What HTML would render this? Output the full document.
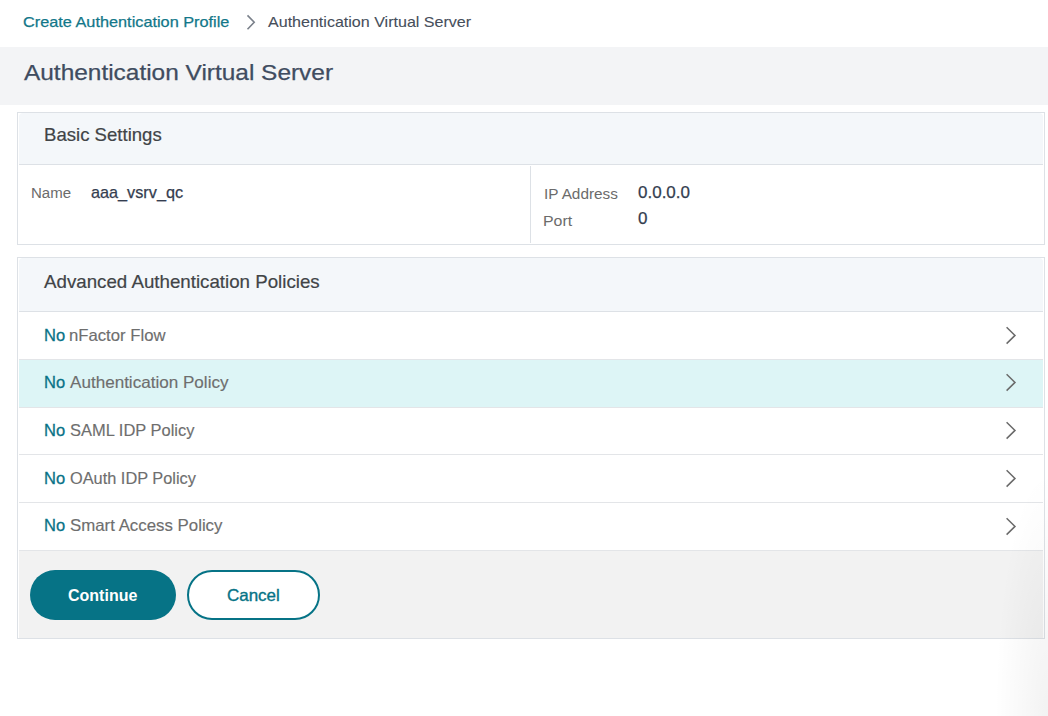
<!DOCTYPE html>
<html>
<head>
<meta charset="utf-8">
<style>
* { box-sizing: border-box; margin: 0; padding: 0; }
html, body { width: 1048px; height: 716px; overflow: hidden; background: #fff; }
body { font-family: "Liberation Sans", sans-serif; position: relative; }
.a { position: absolute; white-space: nowrap; }
.t { line-height: 1; transform-origin: 0 0; }
.box { border: 1px solid #dde1e6; background: #fff; }
.hbg { background: #f4f7fa; border-radius: 4px 4px 0 0; }
.hline { background: #dde1e6; height: 1px; }
.sep { background: #e3e5e8; height: 1px; left: 19px; width: 1024px; }
.rt b { color: #087287; font-weight: 700; }
.chev { left: 1003px; }
.btn { border-radius: 25px; }
.b1 { left: 30px; top: 570px; width: 146px; height: 50px; background: #067386; }
.b2 { left: 187px; top: 570px; width: 133px; height: 50px; background: #fff; border: 2px solid #067386; }
.shadow { left: 995px; top: 470px; width: 53px; height: 246px; background: radial-gradient(ellipse 53px 246px at 100% 100%, rgba(0,0,0,0.05), rgba(0,0,0,0) 100%); pointer-events: none; }
</style>
</head>
<body>
<div class="a" style="left:0;top:47px;width:1048px;height:58px;background:#f3f4f6"></div>
<svg class="a" style="left:245px;top:13px" width="12" height="18" viewBox="0 0 12 18"><path d="M2.5 2.4 L9.2 9.3 L2.5 16.3" fill="none" stroke="#7a808a" stroke-width="1.6"/></svg>

<div class="a box" style="left:17px;top:112px;width:1028px;height:133px"></div>
<div class="a hbg" style="left:19px;top:113px;width:1024px;height:51px"></div>
<div class="a hline" style="left:19px;top:164px;width:1024px"></div>
<div class="a" style="left:530px;top:166px;width:1px;height:77px;background:#dde1e6"></div>

<div class="a box" style="left:17px;top:257px;width:1028px;height:382px"></div>
<div class="a hbg" style="left:19px;top:258px;width:1024px;height:53px"></div>
<div class="a hline" style="left:19px;top:311px;width:1024px"></div>
<div class="a" style="left:19px;top:360px;width:1024px;height:47px;background:#ddf5f6"></div>
<div class="a sep" style="top:359px"></div>
<div class="a sep" style="top:407px"></div>
<div class="a sep" style="top:454px"></div>
<div class="a sep" style="top:502px"></div>
<div class="a sep" style="top:550px"></div>
<div class="a" style="left:19px;top:551px;width:1024px;height:87px;background:#f2f2f2"></div>
<svg class="a chev" style="top:325px" width="20" height="20" viewBox="0 0 20 20"><path d="M3.6 2.2 L12 10.4 L3.6 18.6" fill="none" stroke="#6a6a6a" stroke-width="1.5"/></svg><svg class="a chev" style="top:372px" width="20" height="20" viewBox="0 0 20 20"><path d="M3.6 2.2 L12 10.4 L3.6 18.6" fill="none" stroke="#6a6a6a" stroke-width="1.5"/></svg><svg class="a chev" style="top:420px" width="20" height="20" viewBox="0 0 20 20"><path d="M3.6 2.2 L12 10.4 L3.6 18.6" fill="none" stroke="#6a6a6a" stroke-width="1.5"/></svg><svg class="a chev" style="top:468px" width="20" height="20" viewBox="0 0 20 20"><path d="M3.6 2.2 L12 10.4 L3.6 18.6" fill="none" stroke="#6a6a6a" stroke-width="1.5"/></svg><svg class="a chev" style="top:516px" width="20" height="20" viewBox="0 0 20 20"><path d="M3.6 2.2 L12 10.4 L3.6 18.6" fill="none" stroke="#6a6a6a" stroke-width="1.5"/></svg>
<div class="a btn b1"></div>
<div class="a btn b2"></div>
<div id="crumb1" class="a t " style="left:23px;top:14px;font-size:15px;font-weight:400;color:#127789;-webkit-text-stroke:0.25px #127789;transform:scaleX(1.0856);">Create Authentication Profile</div>
<div id="crumb2" class="a t " style="left:268px;top:14px;font-size:15px;font-weight:400;color:#464e5b;-webkit-text-stroke:0.1px #464e5b;transform:scaleX(1.07);">Authentication Virtual Server</div>
<div id="title" class="a t " style="left:24px;top:62px;font-size:22px;font-weight:400;color:#404c60;-webkit-text-stroke:0.25px #404c60;transform:scaleX(1.11);">Authentication Virtual Server</div>
<div id="basic" class="a t " style="left:44px;top:125px;font-size:19px;font-weight:400;color:#414447;-webkit-text-stroke:0.2px #414447;transform:scaleX(0.9779);">Basic Settings</div>
<div id="name" class="a t " style="left:31px;top:185px;font-size:15.5px;font-weight:400;color:#6b6b6b;transform:scaleX(0.97);">Name</div>
<div id="aaa" class="a t " style="left:91px;top:184px;font-size:17px;font-weight:400;color:#343d4f;-webkit-text-stroke:0.25px #343d4f;transform:scaleX(0.955);">aaa_vsrv_qc</div>
<div id="ip" class="a t " style="left:544px;top:186px;font-size:15.5px;font-weight:400;color:#6b6b6b;transform:scaleX(0.99);">IP Address</div>
<div id="ipv" class="a t " style="left:638px;top:184px;font-size:17px;font-weight:400;color:#343d4f;-webkit-text-stroke:0.25px #343d4f;">0.0.0.0</div>
<div id="port" class="a t " style="left:543px;top:213px;font-size:15.5px;font-weight:400;color:#6b6b6b;transform:scaleX(1.0267);">Port</div>
<div id="portv" class="a t " style="left:638px;top:210px;font-size:17px;font-weight:400;color:#343d4f;-webkit-text-stroke:0.25px #343d4f;">0</div>
<div id="adv" class="a t " style="left:44px;top:272px;font-size:19px;font-weight:400;color:#414447;-webkit-text-stroke:0.2px #414447;transform:scaleX(0.985);">Advanced Authentication Policies</div>
<div id="n1" class="a t " style="left:44px;top:327px;font-size:16.5px;font-weight:400;color:#087287;-webkit-text-stroke:0.3px #087287;">No</div>
<div id="n2" class="a t " style="left:44px;top:374px;font-size:16.5px;font-weight:400;color:#087287;-webkit-text-stroke:0.3px #087287;">No</div>
<div id="n3" class="a t " style="left:44px;top:422px;font-size:16.5px;font-weight:400;color:#087287;-webkit-text-stroke:0.3px #087287;">No</div>
<div id="n4" class="a t " style="left:44px;top:470px;font-size:16.5px;font-weight:400;color:#087287;-webkit-text-stroke:0.3px #087287;">No</div>
<div id="n5" class="a t " style="left:44px;top:517px;font-size:16.5px;font-weight:400;color:#087287;-webkit-text-stroke:0.3px #087287;">No</div>
<div id="r1" class="a t " style="left:69px;top:327px;font-size:16.5px;font-weight:400;color:#6e6e6e;-webkit-text-stroke:0.15px #6e6e6e;transform:scaleX(1.0116);">nFactor Flow</div>
<div id="r2" class="a t " style="left:70px;top:374px;font-size:16.5px;font-weight:400;color:#6e6e6e;-webkit-text-stroke:0.15px #6e6e6e;transform:scaleX(1.035);">Authentication Policy</div>
<div id="r3" class="a t " style="left:69.5px;top:422px;font-size:16.5px;font-weight:400;color:#6e6e6e;-webkit-text-stroke:0.15px #6e6e6e;transform:scaleX(0.998);">SAML IDP Policy</div>
<div id="r4" class="a t " style="left:69.5px;top:470px;font-size:16.5px;font-weight:400;color:#6e6e6e;-webkit-text-stroke:0.15px #6e6e6e;transform:scaleX(0.99);">OAuth IDP Policy</div>
<div id="r5" class="a t " style="left:69.5px;top:517px;font-size:16.5px;font-weight:400;color:#6e6e6e;-webkit-text-stroke:0.15px #6e6e6e;transform:scaleX(1.02);">Smart Access Policy</div>
<div id="cont" class="a t " style="left:68px;top:587px;font-size:16.5px;font-weight:700;color:#ffffff;transform:scaleX(0.97);">Continue</div>
<div id="canc" class="a t " style="left:227px;top:587px;font-size:16.5px;font-weight:400;color:#067386;-webkit-text-stroke:0.35px #067386;transform:scaleX(1.028);">Cancel</div>
<div class="a shadow"></div>
</body>
</html>
